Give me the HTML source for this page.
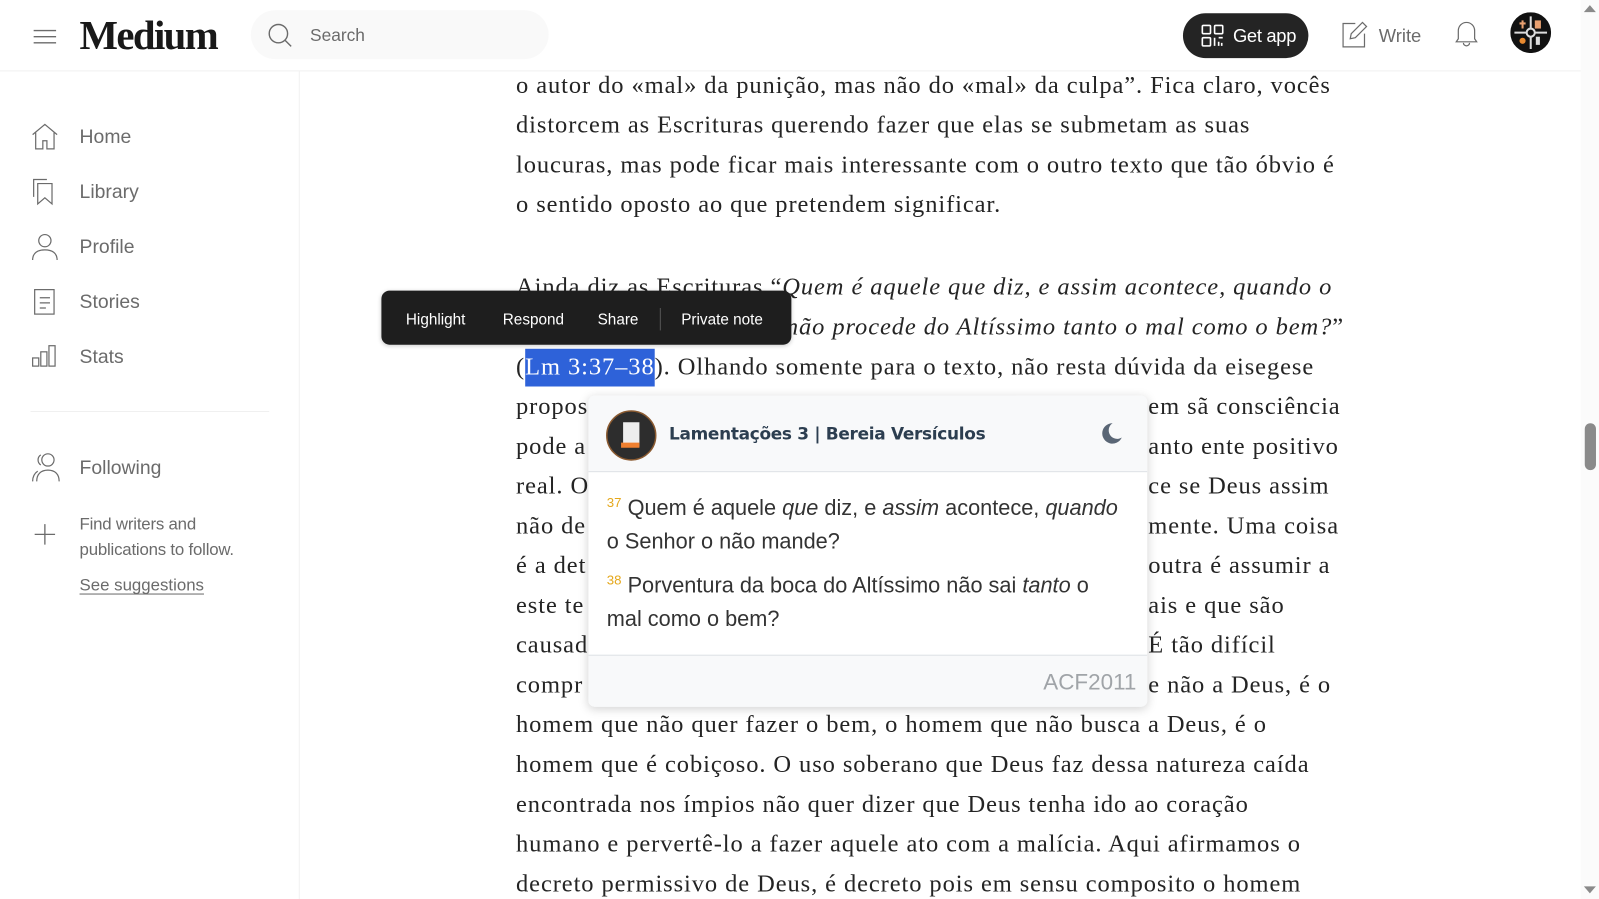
<!DOCTYPE html>
<html><head><meta charset="utf-8"><style>
html,body{margin:0;padding:0;width:1599px;height:899px;overflow:hidden;background:#fff}
#w{position:absolute;left:0;top:0;width:1568px;height:882px;transform:scale(1.0198);transform-origin:0 0;font-family:"Liberation Sans",sans-serif;color:#242424}
.a{position:absolute;white-space:nowrap}
.t{position:absolute;white-space:nowrap;font-family:"Liberation Serif",serif;font-size:24px;letter-spacing:0.9px;color:#242424;line-height:30px;left:506px}
.nav{position:absolute;left:78px;font-size:19px;color:#6b6b6b;line-height:24px}
.ic{position:absolute;left:30px}
.v{position:absolute;left:18px;font-size:21.3px;color:#333;line-height:33px;white-space:nowrap}
.v sup{color:#e5a81c;font-size:13px;vertical-align:8px;line-height:0}
</style></head><body><div id="w">
<!-- header -->
<div class="a" style="left:0;top:69px;width:1550px;height:1px;background:#f0f0f0"></div>
<svg class="a" style="left:32px;top:27px" width="24" height="18" viewBox="0 0 24 18"><path d="M1 3h22M1 9h22M1 15h22" stroke="#6b6b6b" stroke-width="1.3"/></svg>
<div class="a" style="left:78px;top:11px;font-family:'Liberation Serif',serif;font-weight:bold;font-size:40px;letter-spacing:-1.6px;color:#191919">Medium</div>
<div class="a" style="left:246px;top:10px;width:292px;height:48px;border-radius:24px;background:#f9f9f9"></div>
<svg class="a" style="left:262px;top:22px" width="26" height="26" viewBox="0 0 26 26"><circle cx="11" cy="11" r="9" fill="none" stroke="#6b6b6b" stroke-width="1.4"/><path d="M17.5 17.5l6 6" stroke="#6b6b6b" stroke-width="1.4"/></svg>
<div class="a" style="left:304px;top:25px;font-size:17px;color:#6b6b6b">Search</div>
<div class="a" style="left:1160px;top:13px;width:123px;height:44px;border-radius:22px;background:#242424"></div>
<svg class="a" style="left:1178px;top:24px" width="22" height="22" viewBox="0 0 22 22" fill="none" stroke="#fff" stroke-width="1.6"><rect x="1" y="1" width="8" height="8" rx="1"/><rect x="13" y="1" width="8" height="8" rx="1"/><rect x="1" y="13" width="8" height="8" rx="1"/><path d="M13 13v8M17 13h4M17 17v4M20 18v3"/></svg>
<div class="a" style="left:1209px;top:25px;font-size:18px;color:#fff;letter-spacing:-0.3px">Get app</div>
<svg class="a" style="left:1314px;top:20px" width="28" height="28" viewBox="0 0 28 28" fill="none" stroke="#6b6b6b" stroke-width="1.2"><path d="M15 3H3v23h21V13"/><path d="M22 2l4 4-11 11-5 1 1-5z"/></svg>
<div class="a" style="left:1352px;top:25px;font-size:18px;color:#6b6b6b">Write</div>
<svg class="a" style="left:1425px;top:18px" width="26" height="28" viewBox="0 0 26 28" fill="none" stroke="#6b6b6b" stroke-width="1.2"><path d="M5 20V12a8 8 0 0 1 16 0v8l2 3H3z"/><path d="M10 24a3 3 0 0 0 6 0"/></svg>
<svg class="a" style="left:1481px;top:12px" width="40" height="40" viewBox="0 0 40 40"><circle cx="20" cy="20" r="20" fill="#111"/><path d="M20 4v32M4 20h32" stroke="#ddd" stroke-width="2"/><circle cx="20" cy="20" r="4" fill="#111" stroke="#ddd" stroke-width="2"/><path d="M12 8v8M9 11h6" stroke="#e8a070" stroke-width="2"/><rect x="24" y="8" width="6" height="8" fill="#e8a070"/><circle cx="12" cy="28" r="3" fill="#e88a30"/><rect x="25" y="24" width="4" height="8" fill="#ddd"/></svg>
<!-- sidebar -->
<div class="a" style="left:293px;top:70px;width:1px;height:812px;background:#f2f2f2"></div>
<svg class="ic" style="top:120px" width="28" height="28" viewBox="0 0 28 28" fill="none" stroke="#6b6b6b" stroke-width="1.2"><path d="M2 12L14 2l12 10M5 10v16h7v-8h4v8h7V10"/></svg>
<div class="nav" style="top:123px">Home</div>
<svg class="ic" style="top:174px" width="28" height="28" viewBox="0 0 28 28" fill="none" stroke="#6b6b6b" stroke-width="1.2"><path d="M3 19V2h13"/><path d="M7 6h14v20l-7-6-7 6z"/></svg>
<div class="nav" style="top:177px">Library</div>
<svg class="ic" style="top:228px" width="28" height="28" viewBox="0 0 28 28" fill="none" stroke="#6b6b6b" stroke-width="1.2"><circle cx="14" cy="8" r="6"/><path d="M2 27c0-7 5-10 12-10s12 3 12 10"/></svg>
<div class="nav" style="top:231px">Profile</div>
<svg class="ic" style="top:282px" width="28" height="28" viewBox="0 0 28 28" fill="none" stroke="#6b6b6b" stroke-width="1.2"><rect x="4" y="2" width="19" height="24"/><path d="M9 10h10M9 15h10M9 20h6"/></svg>
<div class="nav" style="top:285px">Stories</div>
<svg class="ic" style="top:336px" width="28" height="28" viewBox="0 0 28 28" fill="none" stroke="#6b6b6b" stroke-width="1.2"><rect x="2" y="15" width="6" height="8"/><rect x="10" y="9" width="6" height="14"/><rect x="18" y="3" width="6" height="20"/></svg>
<div class="nav" style="top:339px">Stats</div>
<div class="a" style="left:30px;top:403px;width:234px;height:1px;background:#f0f0f0"></div>
<svg class="ic" style="top:443px" width="30" height="30" viewBox="0 0 30 30" fill="none" stroke="#6b6b6b" stroke-width="1.2"><circle cx="17" cy="8" r="6"/><path d="M6 29c0-7 4-11 11-11s11 4 11 11"/><path d="M10 3a6 6 0 0 0 0 10M2 29c0-5 2-8 5-10"/></svg>
<div class="nav" style="top:448px">Following</div>
<svg class="ic" style="left:33px;top:513px" width="22" height="22" viewBox="0 0 22 22"><path d="M11 1v20M1 11h20" stroke="#6b6b6b" stroke-width="1.3"/></svg>
<div class="nav" style="top:502px;font-size:16.5px;line-height:25px;letter-spacing:-0.2px">Find writers and<br>publications to follow.</div>
<div class="nav" style="top:562px;font-size:16.5px;text-decoration:underline;text-underline-offset:3px">See suggestions</div>
<!-- article -->
<div class="t" style="top:69px">o autor do «mal» da punição, mas não do «mal» da culpa”. Fica claro, vocês</div>
<div class="t" style="top:108px">distorcem as Escrituras querendo fazer que elas se submetam as suas</div>
<div class="t" style="top:147px">loucuras, mas pode ficar mais interessante com o outro texto que tão óbvio é</div>
<div class="t" style="top:186px">o sentido oposto ao que pretendem significar.</div>
<div class="t" style="top:267px">Ainda diz as Escrituras “<i>Quem é aquele que diz, e assim acontece, quando o</i></div>
<div class="a" style="left:506px;top:300px;width:818px;height:40px;overflow:hidden"><div class="t" style="top:6px;left:auto;right:6px"><i>Senhor o não mande? Da boca do Altíssimo, não procede do Altíssimo tanto o mal como o bem?</i>”</div></div>
<div class="t" style="top:345px">(<span style="color:#fff;background:#2e62d9;padding:5px 0 6px">Lm 3:37–38</span>). Olhando somente para o texto, não resta dúvida da eisegese</div>
<div class="t" style="top:384px">propos</div><div class="t" style="top:384px;left:1126px">em sã consciência</div>
<div class="t" style="top:423px">pode a</div><div class="t" style="top:423px;left:1126px">anto ente positivo</div>
<div class="t" style="top:462px">real. O</div><div class="t" style="top:462px;left:1126px">ce se Deus assim</div>
<div class="t" style="top:501px">não de</div><div class="t" style="top:501px;left:1126px">mente. Uma coisa</div>
<div class="t" style="top:540px">é a det</div><div class="t" style="top:540px;left:1126px">outra é assumir a</div>
<div class="t" style="top:579px">este te</div><div class="t" style="top:579px;left:1126px">ais e que são</div>
<div class="t" style="top:618px">causad</div><div class="t" style="top:618px;left:1126px">É tão difícil</div>
<div class="t" style="top:657px">compr</div><div class="t" style="top:657px;left:1126px">e não a Deus, é o</div>
<div class="t" style="top:696px">homem que não quer fazer o bem, o homem que não busca a Deus, é o</div>
<div class="t" style="top:735px">homem que é cobiçoso. O uso soberano que Deus faz dessa natureza caída</div>
<div class="t" style="top:774px">encontrada nos ímpios não quer dizer que Deus tenha ido ao coração</div>
<div class="t" style="top:813px">humano e pervertê-lo a fazer aquele ato com a malícia. Aqui afirmamos o</div>
<div class="t" style="top:852px">decreto permissivo de Deus, é decreto pois em sensu composito o homem</div>
<!-- toolbar -->
<div class="a" style="left:374px;top:285px;width:402px;height:53px;border-radius:8px;background:#1e1e1e;box-shadow:0 1px 4px rgba(0,0,0,.2)"></div>
<div class="a" style="left:398px;top:305px;font-size:15px;color:#fff">Highlight</div>
<div class="a" style="left:493px;top:305px;font-size:15px;color:#fff">Respond</div>
<div class="a" style="left:586px;top:305px;font-size:15px;color:#fff">Share</div>
<div class="a" style="left:647px;top:302px;width:1px;height:22px;background:#555"></div>
<div class="a" style="left:668px;top:305px;font-size:15px;color:#fff">Private note</div>
<!-- popup -->
<div class="a" style="left:577px;top:388px;width:548px;height:305px;background:#fff;border-radius:6px;box-shadow:0 2px 10px rgba(0,0,0,.18);overflow:hidden">
<div class="a" style="left:0;top:0;width:548px;height:74px;background:#f8f9fa;border-bottom:1px solid #dee2e6"></div>
<svg class="a" style="left:17px;top:14px" width="50" height="50" viewBox="0 0 50 50"><circle cx="25" cy="25" r="24" fill="#2d2d2d" stroke="#8a5a30" stroke-width="1.5"/><path d="M17 12h16v24H17z" fill="#eee"/><path d="M15 32h18v5H15z" fill="#f08030"/></svg>
<div class="a" style="left:79px;top:28px;font-weight:bold;color:#2c3e50;font-family:'DejaVu Sans',sans-serif;font-size:16.6px;letter-spacing:-0.3px">Lamentações 3 | Bereia Versículos</div>
<svg class="a" style="left:500px;top:25px" width="24" height="24" viewBox="0 0 24 24"><path d="M14 2a10 10 0 1 0 9 14A8 8 0 0 1 14 2z" fill="#5a6675"/></svg>
<div class="v" style="top:94px"><sup>37</sup> Quem é aquele <i>que</i> diz, e <i>assim</i> acontece, <i>quando</i><br>o Senhor o não mande?</div>
<div class="v" style="top:170px"><sup>38</sup> Porventura da boca do Altíssimo não sai <i>tanto</i> o<br>mal como o bem?</div>
<div class="a" style="left:0;top:254px;width:548px;height:51px;background:#f8f9fa;border-top:1px solid #dee2e6"></div>
<div class="a" style="left:446px;top:268px;font-size:22px;color:#a0a4a8">ACF2011</div>
</div>
<!-- scrollbar -->
<div class="a" style="left:1550px;top:0;width:18px;height:882px;background:#fbfbfb"></div>
<div class="a" style="left:1554px;top:415px;width:11px;height:46px;border-radius:6px;background:#8a8a8a"></div>
<svg class="a" style="left:1553px;top:4px" width="12" height="8"><path d="M0 8L6 1l6 7z" fill="#8a8a8a"/></svg>
<svg class="a" style="left:1553px;top:869px" width="12" height="8"><path d="M0 0h12L6 7z" fill="#8a8a8a"/></svg>
</div></body></html>
